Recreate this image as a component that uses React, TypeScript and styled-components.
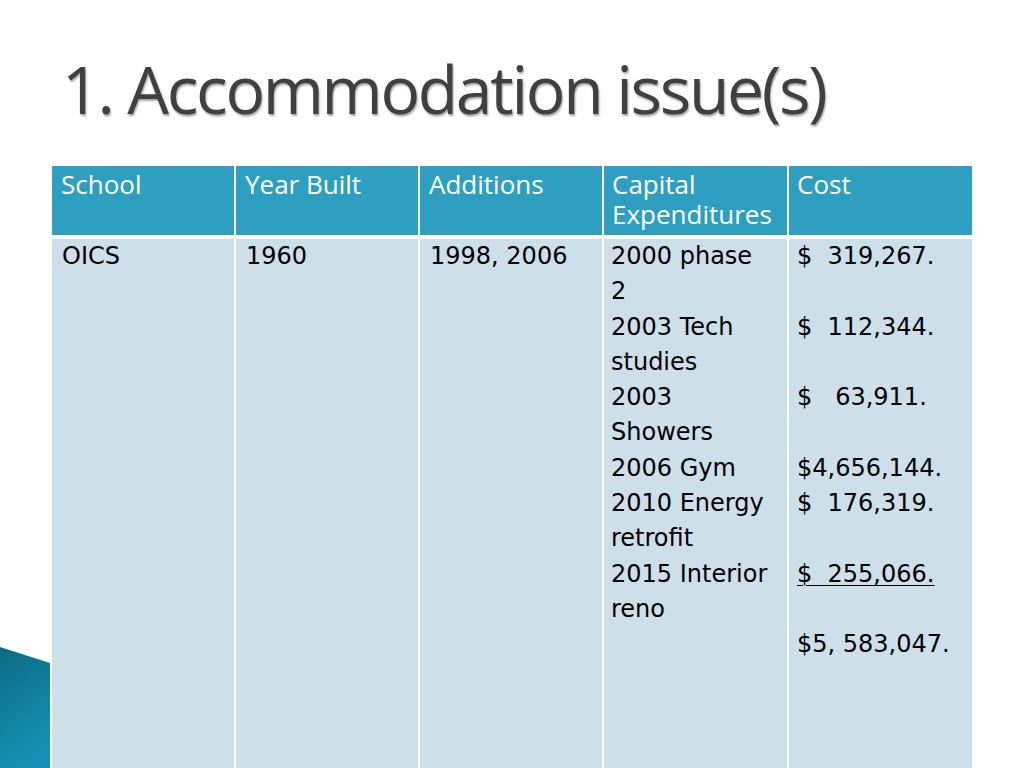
import React from "react";
import styled, { createGlobalStyle } from "styled-components";

const Global = createGlobalStyle`
  html, body { margin: 0; padding: 0; background: #ffffff; }
  body { width: 1024px; height: 768px; overflow: hidden; position: relative; }
`;

const Slide = styled.div`
  position: relative;
  width: 1024px;
  height: 768px;
  overflow: hidden;
  background: #ffffff;
  display: flex;
  flex-direction: column;
`;

const Title = styled.h1`
  margin: 48px 0 0 62px;
  font-family: "Open Sans", sans-serif;
  font-weight: 400;
  font-size: 66px;
  line-height: 80px;
  letter-spacing: -2.3px;
  color: #404040;
  text-shadow: 1px 2px 2px rgba(0, 0, 0, 0.35);
`;

const Table = styled.div`
  margin: 38px 0 0 52px;
  width: 920px;
  display: grid;
  grid-template-columns: 182px 182px 182px 183px 183px;
  grid-template-rows: 69px 540px;
  gap: 4px 2px;
  background: #ffffff;
`;

const HeadCell = styled.div`
  background: #2e9fc0;
  color: #ffffff;
  font-family: "Open Sans", sans-serif;
  font-size: 26px;
  line-height: 30px;
  padding: 3px 8px 0 ${(p: { $pad?: number }) => p.$pad ?? 9}px;
`;

const BodyCell = styled.div<{ $pad?: number }>`
  background: #cddfe8;
  color: #000000;
  font-family: "DejaVu Sans", sans-serif;
  font-size: 24px;
  line-height: 35.3px;
  padding: 0 6px 0 ${(p) => p.$pad ?? 10}px;
  white-space: pre;
`;

const Under = styled.span`
  text-decoration: underline;
  text-decoration-thickness: 1px;
  text-underline-offset: 3px;
`;

const Corner = styled.svg`
  position: absolute;
  left: 0;
  top: 640px;
`;

export default function App() {
  return (
    <Slide>
      <Global />
      <Title>1. Accommodation issue(s)</Title>
      <Table>
        <HeadCell>School</HeadCell>
        <HeadCell>Year Built</HeadCell>
        <HeadCell>Additions</HeadCell>
        <HeadCell $pad={8}>
          Capital
          <br />
          Expenditures
        </HeadCell>
        <HeadCell $pad={8}>Cost</HeadCell>
        <BodyCell>OICS</BodyCell>
        <BodyCell>1960</BodyCell>
        <BodyCell>1998, 2006</BodyCell>
        <BodyCell $pad={7}>
          {"2000 phase\n2\n2003 Tech\nstudies\n2003\nShowers\n2006 Gym\n2010 Energy\nretrofit\n2015 Interior\nreno"}
        </BodyCell>
        <BodyCell $pad={8}>
          {"$  319,267.\n\n$  112,344.\n\n$   63,911.\n\n$4,656,144.\n$  176,319.\n\n"}
          <Under>{"$  255,066."}</Under>
          {"\n\n$5, 583,047."}
        </BodyCell>
      </Table>
      <Corner width="52" height="128" viewBox="0 0 52 128">
        <defs>
          <linearGradient id="cg" x1="0" y1="0" x2="0.3" y2="1">
            <stop offset="0" stopColor="#0b6a82" />
            <stop offset="1" stopColor="#1590b2" />
          </linearGradient>
        </defs>
        <polygon points="0,7 50,23 50,128 0,128" fill="url(#cg)" />
      </Corner>
    </Slide>
  );
}
